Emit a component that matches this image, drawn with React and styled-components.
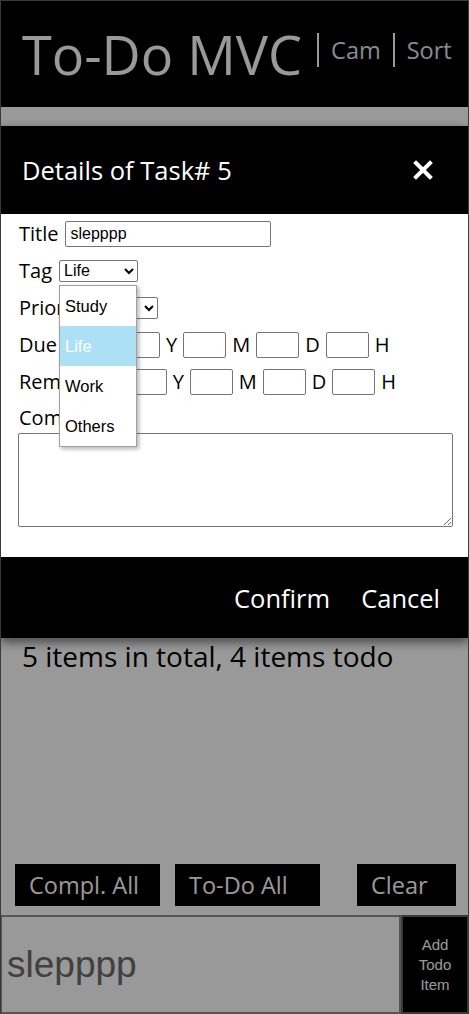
import styled, { createGlobalStyle } from "styled-components";

const GlobalStyle = createGlobalStyle`
  html, body {
    margin: 0;
    padding: 0;
  }
  body {
    font-family: "Open Sans", "Noto Sans", sans-serif;
    background: #fff;
  }
  * {
    box-sizing: border-box;
  }
`;

const Page = styled.div`
  min-height: 100vh;
  display: flex;
  flex-direction: column;
`;

const Frame = styled.div`
  position: fixed;
  inset: 0;
  border: 1px solid #3a3a3a;
  border-bottom: none;
  pointer-events: none;
  z-index: 30;
`;

const Header = styled.header`
  height: 107px;
  background: #000;
  display: flex;
  align-items: center;
  padding-left: 22px;
`;

const Brand = styled.h1`
  margin: 0 15px 0 0;
  font-size: 54px;
  font-weight: 400;
  line-height: 1;
  color: #fff;
`;

const NavLink = styled.a`
  align-self: flex-start;
  margin-top: 33px;
  height: 34px;
  border-left: 2px solid #fff;
  padding: 0 12px 0 12px;
  font-size: 23.5px;
  line-height: 34px;
  color: #dde8f4;
  text-decoration: none;
`;

const Main = styled.main`
  flex: 1;
  padding: 531px 22px 0;
`;

const Summary = styled.p`
  margin: 0;
  font-size: 28px;
  line-height: 36px;
  color: #000;
`;

const Toolbar = styled.div`
  display: flex;
  gap: 15px;
  padding: 0 13px 0 15px;
  margin-bottom: 9px;
`;

const ToolButton = styled.button`
  width: ${(props) => props.width}px;
  margin-left: ${(props) => (props.push ? "auto" : "0")};
  height: 42px;
  border: none;
  background: #000;
  color: #fff;
  font-family: "Open Sans", "Noto Sans", sans-serif;
  font-size: 23.5px;
  text-align: left;
  padding: 0 0 0 14px;
`;

const EntryRow = styled.div`
  display: flex;
  height: 99px;
`;

const EntryInput = styled.input`
  flex: 1;
  min-width: 0;
  height: 100%;
  border: 2px solid #8e8e8e;
  padding: 0 5px;
  font-family: "Liberation Sans", Arial, sans-serif;
  font-size: 37px;
  color: #6b6b6b;
  background: #fff;
`;

const AddButton = styled.button`
  width: 68px;
  height: 100%;
  border: 2px solid #616161;
  background: #000;
  color: #fff;
  font-family: "Liberation Sans", Arial, sans-serif;
  font-size: 15px;
  line-height: 20px;
  padding: 0 4px;
`;

const Backdrop = styled.div`
  position: fixed;
  inset: 0;
  background: rgba(0, 0, 0, 0.4);
  z-index: 10;
`;

const Modal = styled.div`
  position: fixed;
  top: 126px;
  left: 0;
  right: 0;
  z-index: 20;
  box-shadow: 0 4px 10px rgba(0, 0, 0, 0.55);
`;

const ModalHeader = styled.div`
  height: 88px;
  background: #000;
  display: flex;
  align-items: center;
  justify-content: space-between;
  padding: 0 36px 0 22px;
`;

const ModalTitle = styled.h2`
  margin: 0;
  font-size: 25.5px;
  font-weight: 400;
  color: #fff;
`;

const CloseButton = styled.button`
  display: flex;
  padding: 0;
  border: none;
  background: none;
`;

const ModalBody = styled.div`
  background: #fff;
  padding: 1px 16px 30px 18px;
`;

const Row = styled.div`
  display: flex;
  align-items: center;
  gap: ${(props) => props.gap || 7}px;
  height: 37px;
`;

const Label = styled.label`
  font-size: 20px;
  color: #000;
  padding-left: 1px;
`;

const Unit = styled.span`
  font-size: 20px;
  color: #000;
`;

const TextInput = styled.input`
  width: ${(props) => props.width}px;
  height: 26px;
  border: 1px solid #767676;
  border-radius: 2px;
  padding: 1px 4px;
  font-family: "Liberation Sans", Arial, sans-serif;
  font-size: 16px;
  color: #000;
`;

const SelectWrap = styled.div`
  position: relative;
`;

const Select = styled.select`
  width: ${(props) => props.width}px;
  height: 22px;
  border: 1px solid #767676;
  border-radius: 2px;
  font-family: "Liberation Sans", Arial, sans-serif;
  font-size: 16px;
  color: #000;
  background: #fff;
`;

const Menu = styled.ul`
  position: absolute;
  top: calc(100% + 3px);
  left: 0;
  width: 78px;
  margin: 0;
  padding: 0;
  list-style: none;
  background: #fff;
  border: 1px solid #a0a0a0;
  box-shadow: 2px 2px 4px rgba(0, 0, 0, 0.3);
  z-index: 5;
`;

const MenuItem = styled.li`
  height: 40px;
  line-height: 40px;
  padding-left: 5px;
  font-family: "Liberation Sans", Arial, sans-serif;
  font-size: 16.5px;
  color: ${(props) => (props.active ? "#fff" : "#000")};
  background: ${(props) => (props.active ? "#ade0f5" : "#fff")};
`;

const CommentLabel = styled.div`
  height: 33px;
  display: flex;
  align-items: flex-end;
  padding-bottom: 2px;
`;

const Comment = styled.textarea`
  display: block;
  width: 100%;
  height: 94px;
  border: 1px solid #767676;
  border-radius: 2px;
  resize: both;
`;

const ModalFooter = styled.div`
  height: 81px;
  background: #000;
  display: flex;
  align-items: center;
  justify-content: flex-end;
  gap: 31px;
  padding-right: 29px;
`;

const FooterButton = styled.button`
  border: none;
  background: none;
  padding: 0;
  color: #fff;
  font-family: "Open Sans", "Noto Sans", sans-serif;
  font-size: 25.5px;
`;

const tags = ["Study", "Life", "Work", "Others"];

const DateRow = ({ label, first }) => (
  <Row gap={6}>
    <Label>{label}</Label>
    <TextInput width={first} />
    <Unit>Y</Unit>
    <TextInput width={43} />
    <Unit>M</Unit>
    <TextInput width={43} />
    <Unit>D</Unit>
    <TextInput width={43} />
    <Unit>H</Unit>
  </Row>
);

const App = () => {
  return (
    <>
      <GlobalStyle />
      <Page>
        <Header>
          <Brand>To-Do MVC</Brand>
          <NavLink>Cam</NavLink>
          <NavLink>Sort</NavLink>
        </Header>
        <Main>
          <Summary>5 items in total, 4 items todo</Summary>
        </Main>
        <Toolbar>
          <ToolButton width={145}>Compl. All</ToolButton>
          <ToolButton width={145}>To-Do All</ToolButton>
          <ToolButton width={99} push>
            Clear
          </ToolButton>
        </Toolbar>
        <EntryRow>
          <EntryInput defaultValue="slepppp" />
          <AddButton>Add Todo Item</AddButton>
        </EntryRow>
      </Page>

      <Backdrop />
      <Modal>
        <ModalHeader>
          <ModalTitle>Details of Task# 5</ModalTitle>
          <CloseButton>
            <svg width="20" height="20" viewBox="0 0 20 20">
              <path
                d="M3 3 L17 17 M17 3 L3 17"
                stroke="#fff"
                strokeWidth="4"
                strokeLinecap="square"
              />
            </svg>
          </CloseButton>
        </ModalHeader>
        <ModalBody>
          <Row>
            <Label>Title</Label>
            <TextInput width={206} defaultValue="slepppp" />
          </Row>
          <Row>
            <Label>Tag</Label>
            <SelectWrap>
              <Select width={79} defaultValue="Life">
                {tags.map((t) => (
                  <option key={t}>{t}</option>
                ))}
              </Select>
              <Menu>
                {tags.map((t) => (
                  <MenuItem key={t} active={t === "Life"}>
                    {t}
                  </MenuItem>
                ))}
              </Menu>
            </SelectWrap>
          </Row>
          <Row>
            <Label>Priority</Label>
            <Select width={64} defaultValue="Mid">
              <option>High</option>
              <option>Mid</option>
              <option>Low</option>
            </Select>
          </Row>
          <DateRow label="Due" first={97} />
          <DateRow label="Remind" first={70} />
          <CommentLabel>
            <Label>Comment</Label>
          </CommentLabel>
          <Comment />
        </ModalBody>
        <ModalFooter>
          <FooterButton>Confirm</FooterButton>
          <FooterButton>Cancel</FooterButton>
        </ModalFooter>
      </Modal>
      <Frame />
    </>
  );
};

export default App;
